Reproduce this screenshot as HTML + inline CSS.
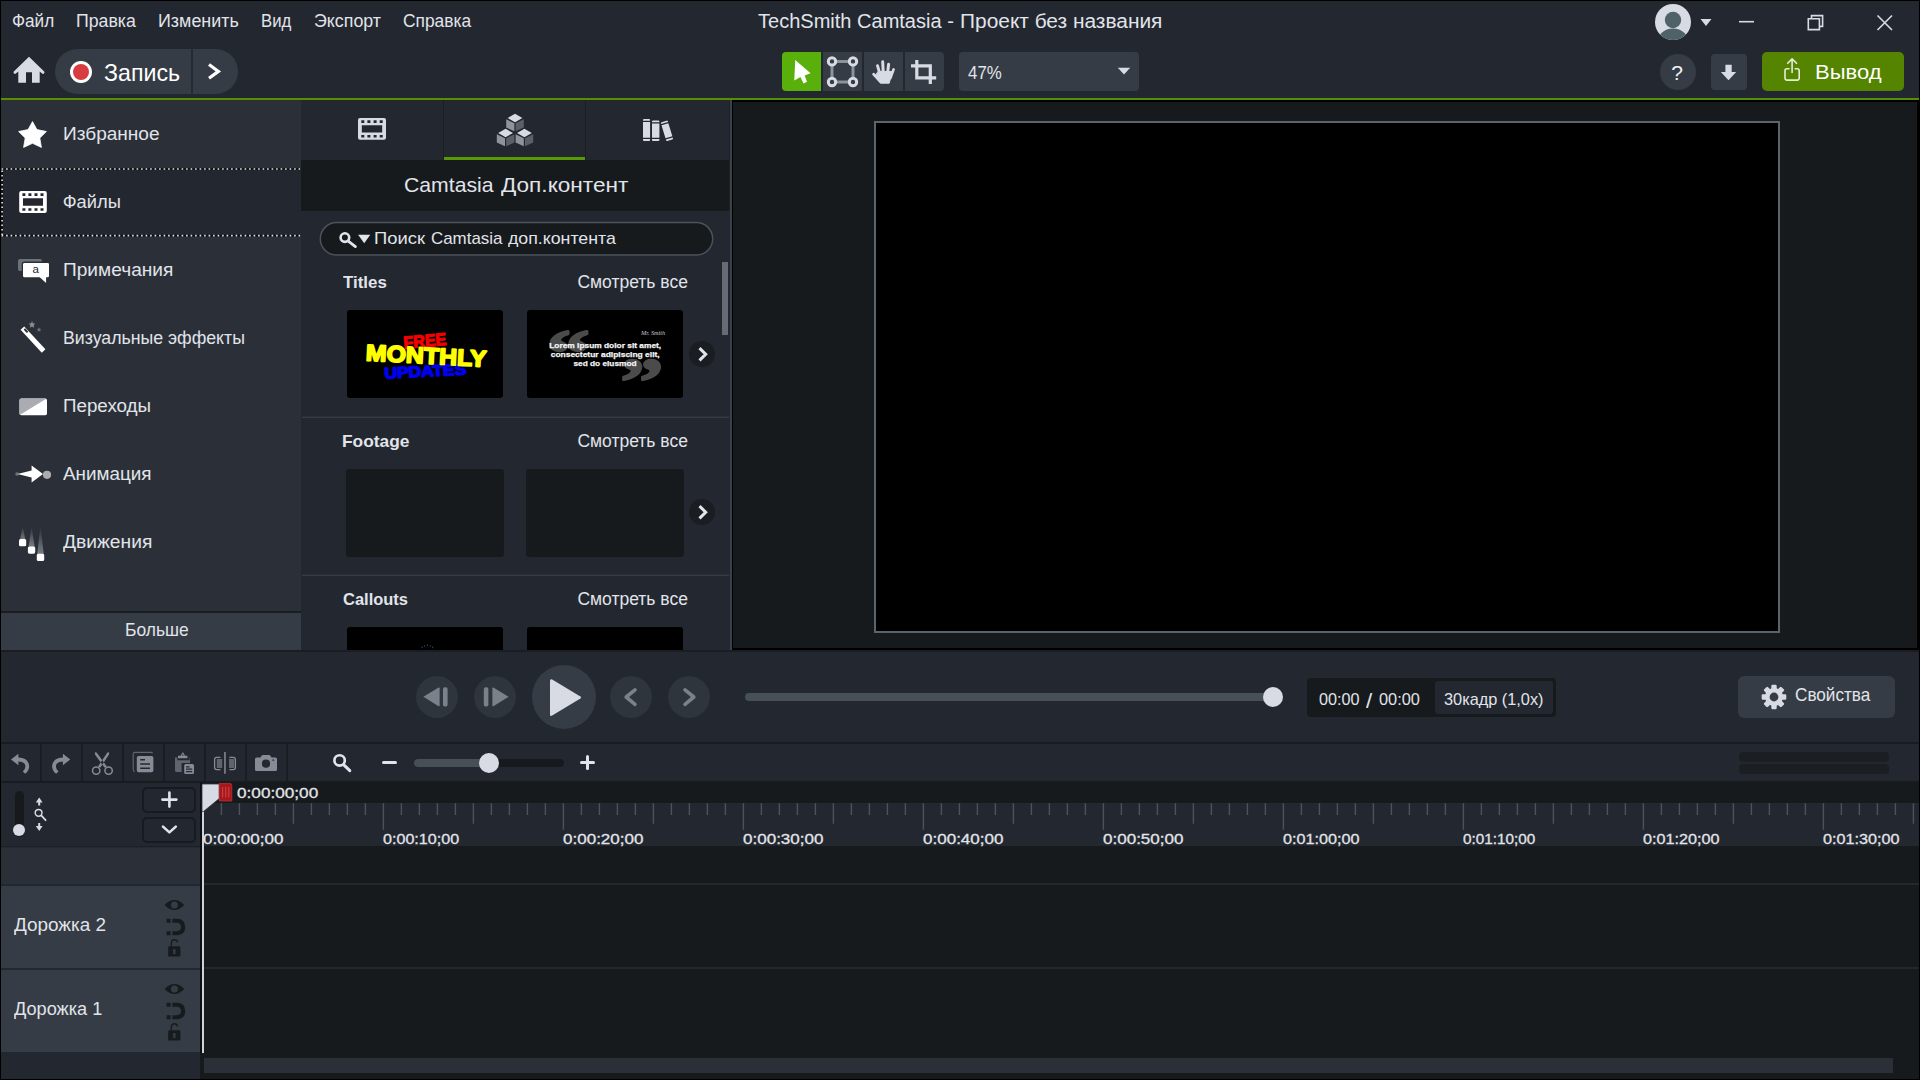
<!DOCTYPE html>
<html lang="ru">
<head>
<meta charset="utf-8">
<title>TechSmith Camtasia - Проект без названия</title>
<style>
html,body{margin:0;padding:0;background:#000;}
body{width:1920px;height:1080px;overflow:hidden;font-family:"Liberation Sans",sans-serif;}
#app{position:absolute;left:0;top:0;width:1920px;height:1080px;overflow:hidden;background:#000;}
#app div,#app span,#app svg{position:absolute;box-sizing:border-box;}
.t{white-space:nowrap;line-height:1;transform-origin:0 50%;display:block;color:#e1e4ea;}
</style>
</head>
<body>
<div id="app">

<!-- top bar -->
<div style="left:1px;top:1px;width:1918px;height:97px;background:#23272f"></div>
<div style="left:1px;top:98px;width:1918px;height:2px;background:#568f00"></div>
<!-- sidebar -->
<div style="left:1px;top:100px;width:300px;height:511px;background:#2b3038"></div>
<div style="left:1px;top:168px;width:300px;height:68px;background:#23272f"></div>
<svg style="left:1px;top:167px" width="300" height="70" viewBox="1 167 300 70"><path d="M1.2 169 H301 M1.2 235.6 H301 M2.1 169 V235.6" fill="none" stroke="#0c0e11" stroke-width="1.6"/><path d="M1.6 169 H301 M1.6 235.6 H301 M2.1 170.4 V235" fill="none" stroke="#e4e4e4" stroke-width="1.6" stroke-dasharray="1.6 2.9"/></svg>
<div style="left:1px;top:611px;width:300px;height:2px;background:#1a1e22"></div>
<div style="left:1px;top:613px;width:300px;height:37px;background:#353c45"></div>
<!-- media panel -->
<div style="left:301px;top:100px;width:428px;height:60px;background:#23272f"></div>
<div style="left:443px;top:100px;width:1px;height:60px;background:#1a1e22"></div>
<div style="left:585px;top:100px;width:1px;height:60px;background:#1a1e22"></div>
<div style="left:444px;top:157px;width:141px;height:3px;background:#5a9708"></div>
<div style="left:301px;top:160px;width:428px;height:51px;background:#161a1d"></div>
<div style="left:301px;top:211px;width:429px;height:439px;background:#23272f"></div>
<div style="left:730px;top:100px;width:2px;height:550px;background:#3a414a"></div>
<div style="left:729px;top:100px;width:1px;height:111px;background:#1e2228"></div>
<!-- search -->
<svg style="left:318px;top:220px" width="398" height="38" viewBox="318 220 398 38"><rect x="320.3" y="222.6" width="392.4" height="32.4" rx="16.2" fill="#161a1d" stroke="#4c535b" stroke-width="1.5"/></svg>
<!-- scrollbar -->
<div style="left:722px;top:262px;width:6px;height:73px;background:#666b75"></div>
<!-- section separators -->
<div style="left:302px;top:416px;width:427px;height:1px;background:#2a2f37"></div><div style="left:302px;top:417px;width:427px;height:1px;background:#363c45"></div>
<div style="left:302px;top:574px;width:427px;height:1px;background:#2a2f37"></div><div style="left:302px;top:575px;width:427px;height:1px;background:#363c45"></div>
<!-- thumbs -->
<div style="left:347px;top:310px;width:156px;height:88px;border-radius:3px;background:#000"></div>
<div style="left:527px;top:310px;width:156px;height:88px;border-radius:3px;background:#000"></div>
<div style="left:346px;top:469px;width:158px;height:88px;border-radius:3px;background:#161a1d"></div>
<div style="left:526px;top:469px;width:158px;height:88px;border-radius:3px;background:#161a1d"></div>
<div style="left:347px;top:627px;width:156px;height:23px;border-radius:3px 3px 0 0;background:#000"></div>
<div style="left:527px;top:627px;width:156px;height:23px;border-radius:3px 3px 0 0;background:#000"></div>
<div style="left:689px;top:341px;width:26px;height:26px;border-radius:13px;background:#1a1e22"></div>
<div style="left:689px;top:499px;width:26px;height:26px;border-radius:13px;background:#1a1e22"></div>
<!-- preview -->
<div style="left:733px;top:102px;width:1184px;height:546px;background:#161a1d"></div>
<div style="left:874px;top:121px;width:906px;height:512px;background:#000;border:2px solid #5b636c"></div>
<!-- playback bar -->
<div style="left:1px;top:650px;width:1918px;height:2px;background:#1a1e22"></div>
<div style="left:1px;top:652px;width:1918px;height:90px;background:#23272f"></div>
<div style="left:1px;top:742px;width:1918px;height:2px;background:#181c20"></div>
<!-- timeline toolbar -->
<div style="left:1px;top:744px;width:1918px;height:37px;background:#23272f"></div>
<div style="left:1px;top:781px;width:1918px;height:2px;background:#181c20"></div>
<!-- timeline header left -->
<div style="left:1px;top:783px;width:199px;height:63px;background:#23272f"></div>
<div style="left:1px;top:846px;width:199px;height:1px;background:#1c2025"></div>
<div style="left:1px;top:847px;width:199px;height:37px;background:#2b3038"></div>
<div style="left:1px;top:847px;width:199px;height:1px;background:#252a31"></div>
<div style="left:1px;top:884px;width:199px;height:2px;background:#23272f"></div>
<div style="left:1px;top:886px;width:199px;height:82px;background:#353c45"></div>
<div style="left:1px;top:968px;width:199px;height:2px;background:#23272f"></div>
<div style="left:1px;top:970px;width:199px;height:82px;background:#353c45"></div>
<div style="left:1px;top:1052px;width:199px;height:27px;background:#23272f"></div>
<!-- timeline right -->
<div style="left:200px;top:783px;width:1719px;height:296px;background:#161a1d"></div>
<div style="left:200px;top:783px;width:2px;height:270px;background:#0c0f11"></div>
<div style="left:203px;top:803px;width:1716px;height:43px;background:#23272f"></div>
<div style="left:203px;top:883px;width:1716px;height:2px;background:#23272f"></div>
<div style="left:203px;top:967px;width:1716px;height:2px;background:#23272f"></div>
<div style="left:204px;top:1058px;width:1689px;height:15px;background:#2b3038"></div>

<!-- ===== top toolbar ===== -->
<svg style="left:12px;top:54px" width="36" height="32" viewBox="12 54 36 32"><path d="M29 56.8 L44.2 71.6 Q44.9 72.6 44 73.5 Q43.1 74.3 42.1 73.6 L39.7 71.4 V82.8 H32 V72.3 H26 V82.8 H18.3 V71.4 L15.9 73.6 Q14.9 74.3 14 73.5 Q13.1 72.6 13.8 71.6 Z" fill="#d8dbe3"/></svg>
<div style="left:55px;top:49px;width:183px;height:45px;border-radius:22.5px;background:#353c45"></div>
<div style="left:191px;top:49px;width:2px;height:45px;background:#262b32"></div>
<div style="left:70px;top:61px;width:22px;height:22px;border-radius:11px;background:#fff"></div>
<div style="left:73px;top:64px;width:16px;height:16px;border-radius:8px;background:#d63c40"></div>
<svg style="left:205px;top:60px" width="20" height="24" viewBox="205 60 20 24"><path d="M209 64.5 L218.4 71.4 L209 78.3" fill="none" stroke="#fff" stroke-width="3.2"/></svg>
<!-- tool buttons -->
<div style="left:782px;top:52px;width:39px;height:39px;background:#5ab00a;border-radius:4px 0 0 4px"></div>
<div style="left:823px;top:52px;width:39px;height:39px;background:#353c45"></div>
<div style="left:864px;top:52px;width:39px;height:39px;background:#353c45"></div>
<div style="left:905px;top:52px;width:39px;height:39px;background:#353c45;border-radius:0 4px 4px 0"></div>
<svg style="left:782px;top:52px" width="39" height="39" viewBox="782 52 39 39"><path d="M795.2 60 L810.6 73.2 L804.6 75.6 L807 81.8 L803.6 83.4 L800.4 77 L794.3 80.4 Z" fill="#fff"/></svg>
<svg style="left:823px;top:52px" width="39" height="39" viewBox="823 52 39 39"><g fill="none"><path d="M832 61.4 H853 V82 H832 Z" stroke="#8d929b" stroke-width="3"/><g stroke="#d8dbe3" stroke-width="3" fill="#353c45"><circle cx="832" cy="61.4" r="3.7"/><circle cx="853" cy="61.4" r="3.7"/><circle cx="832" cy="82" r="3.7"/><circle cx="853" cy="82" r="3.7"/></g></g></svg>
<svg style="left:864px;top:52px" width="39" height="39" viewBox="864 52 39 39"><g fill="#d8dbe3" stroke="#d8dbe3" stroke-linecap="round" stroke-linejoin="round"><path d="M878.6 71.4 L892.4 71.6 L889.2 83.2 L880.4 83.2 L874.6 76.6 Z" stroke-width="1"/><g fill="none"><path d="M873.6 74.2 L879 79.6" stroke-width="2.7"/><path d="M877.5 65.7 L880.2 75" stroke-width="2.9"/><path d="M882.7 61.8 L883.3 74" stroke-width="3"/><path d="M888.6 64.3 L887.5 74" stroke-width="3"/><path d="M893.6 69.4 L890.4 78" stroke-width="2.7"/></g></g></svg>
<svg style="left:905px;top:52px" width="39" height="39" viewBox="905 52 39 39"><path d="M916.8 60 V77.9 H936.2 M911 65.8 H930.3 V84" fill="none" stroke="#d8dbe3" stroke-width="3.2"/></svg>
<!-- zoom dropdown -->
<div style="left:959px;top:52px;width:180px;height:39px;background:#353c45;border-radius:4px"></div>
<svg style="left:1115px;top:65px" width="18" height="12" viewBox="1115 65 18 12"><path d="M1117.8 67.8 H1130.2 L1124 74.4 Z" fill="#d8dbe3"/></svg>
<!-- account + window controls -->
<svg style="left:1654px;top:3px" width="38" height="38" viewBox="1654 3 38 38"><defs><clipPath id="av"><circle cx="1673" cy="22" r="18"/></clipPath></defs><circle cx="1673" cy="22" r="18" fill="#d8dbe3"/><g clip-path="url(#av)" fill="#4f6268"><circle cx="1673" cy="20" r="8.2"/><ellipse cx="1673" cy="43" rx="16" ry="14.5"/></g></svg>
<svg style="left:1699px;top:17px" width="14" height="10" viewBox="1699 17 14 10"><path d="M1700.5 19 H1711.5 L1706 26 Z" fill="#d8dbe3"/></svg>
<svg style="left:1735px;top:10px" width="165" height="26" viewBox="1735 10 165 26"><g fill="none" stroke="#d8dbe3" stroke-width="1.6"><path d="M1739 21.7 H1754"/><path d="M1808.3 18.8 H1819.4 V29.6 H1808.3 Z"/><path d="M1811.5 18.8 V15.6 H1822.6 V26.4 H1819.4"/><path d="M1877.5 15.5 L1892 30 M1892 15.5 L1877.5 30"/></g></svg>
<!-- help / download / output -->
<div style="left:1660px;top:54px;width:36px;height:36px;border-radius:18px;background:#353c45"></div>
<span class="t" style="left:1671.3px;top:61.6px;font-size:21px;color:#f0f2f6">?</span>
<div style="left:1711px;top:54px;width:36px;height:36px;border-radius:4px;background:#353c45"></div>
<svg style="left:1711px;top:54px" width="36" height="36" viewBox="1711 54 36 36"><path d="M1725.4 64.8 H1731.7 V72 H1736.2 L1728.5 80.2 L1720.9 72 H1725.4 Z" fill="#d8dbe3"/></svg>
<div style="left:1762px;top:52px;width:142px;height:39px;border-radius:5px;background:#548400"></div>
<svg style="left:1780px;top:55px" width="24" height="30" viewBox="1780 55 24 30"><g fill="none" stroke="#e6ecd8" stroke-width="1.6" stroke-linecap="round" stroke-linejoin="round"><path d="M1789 68.8 H1787 Q1785 68.8 1785 70.8 V78.1 Q1785 80.1 1787 80.1 H1797.2 Q1799.2 80.1 1799.2 78.1 V70.8 Q1799.2 68.8 1797.2 68.8 H1795.2"/><path d="M1792.1 72.4 V58.9 M1787.7 63.3 L1792.1 58.9 L1796.5 63.3"/></g></svg>
<!-- ===== sidebar icons ===== -->
<svg style="left:17px;top:120px" width="32" height="30" viewBox="17 120 32 30"><path d="M32.5 121.6 L36.9 129.6 L46.4 131.5 L39.8 138 L41.4 147.4 L32.5 143.3 L23.6 147.4 L25.2 138 L18.6 131.5 L28.1 129.6 Z" fill="#fff" stroke="#fff" stroke-width="0.8" stroke-linejoin="round"/></svg>
<svg style="left:18px;top:190px" width="30" height="24" viewBox="18 190 30 24"><path fill-rule="evenodd" fill="#fff" d="M21.3 191 H44.7 Q46.8 191 46.8 193 V211 Q46.8 213 44.7 213 H21.3 Q19.2 213 19.2 211 V193 Q19.2 191 21.3 191 Z M23 198.2 V205.8 H43 V198.2 Z M22.4 193.3 h3 v2.6 h-3 Z M28.4 193.3 h3 v2.6 h-3 Z M34.5 193.3 h3 v2.6 h-3 Z M40.5 193.3 h3 v2.6 h-3 Z M22.4 208.2 h3 v2.6 h-3 Z M28.4 208.2 h3 v2.6 h-3 Z M34.5 208.2 h3 v2.6 h-3 Z M40.5 208.2 h3 v2.6 h-3 Z"/></svg>
<svg style="left:17px;top:257px" width="34" height="28" viewBox="17 257 34 28"><rect x="18" y="259" width="24" height="12" rx="2" fill="#6c7279"/><path d="M24.5 262.2 H47.7 Q49.7 262.2 49.7 264.2 V276 Q49.7 278 47.7 278 H46.8 V284.6 L39.4 278 H24.5 Q22.3 278 22.3 276 V264.2 Q22.3 262.2 24.5 262.2 Z" fill="#fff" stroke="#2b3038" stroke-width="1.4"/><text x="35.7" y="273.2" font-family="'Liberation Sans', sans-serif" font-size="11.5" font-weight="400" fill="#23272f" text-anchor="middle">a</text></svg>
<svg style="left:17px;top:318px" width="34" height="36" viewBox="17 318 34 36"><path d="M24.2 326.4 L45.4 349.3 L41.8 352.7 L20.6 329.8 Z" fill="#fff"/><path d="M23.6 329.6 L25.1 328.2 L28.3 331.7 L26.8 333.1 Z" fill="#2b3038"/><path d="M32 321 L33 323.4 L35.4 323.6 L33.6 325.2 L34.2 327.7 L32 326.4 L29.8 327.7 L30.4 325.2 L28.6 323.6 L31 323.4 Z" fill="#8b9096"/><path d="M39 327.2 L39.7 328.8 L41.4 329 L40.1 330.1 L40.5 331.8 L39 330.9 L37.5 331.8 L37.9 330.1 L36.6 329 L38.3 328.8 Z" fill="#6c7279"/></svg>
<svg style="left:18px;top:397px" width="30" height="20" viewBox="18 397 30 20"><defs><clipPath id="trc"><rect x="19.5" y="398.5" width="27.5" height="16.7" rx="1.8"/></clipPath></defs><g clip-path="url(#trc)"><rect x="19" y="398" width="29" height="18" fill="#fff"/><path d="M19 398 H47.5 L19 415.6 Z" fill="#a9adb1"/></g></svg>
<svg style="left:14px;top:463px" width="40" height="22" viewBox="14 463 40 22"><circle cx="17" cy="474" r="1.8" fill="#6c7279"/><path d="M17.5 474 L31.6 470.6 V465.6 L43 474 L31.6 482.4 V477.6 Z" fill="#fff"/><circle cx="47" cy="474.8" r="4.1" fill="#a9adb1"/></svg>
<svg style="left:17px;top:524px" width="30" height="40" viewBox="17 524 30 40"><defs><linearGradient id="trl" x1="0" y1="0" x2="0" y2="1"><stop offset="0" stop-color="#8b9096" stop-opacity="0"/><stop offset="1" stop-color="#8b9096" stop-opacity="0.85"/></linearGradient></defs><path d="M22.7 526 L25.6 541 H19.8 Z" fill="url(#trl)"/><path d="M31.6 526 L34.8 548 H28.4 Z" fill="url(#trl)"/><path d="M40.4 526 L44 556 H37 Z" fill="url(#trl)"/><rect x="19" y="539" width="7.2" height="7.3" rx="1.6" fill="#fff"/><rect x="27.9" y="546.4" width="7.3" height="7.3" rx="1.6" fill="#fff"/><rect x="36.8" y="553.8" width="7.4" height="7.3" rx="1.6" fill="#fff"/></svg>
<!-- ===== panel tab icons ===== -->
<svg style="left:357px;top:117px" width="30" height="24" viewBox="357 117 30 24"><path fill-rule="evenodd" fill="#d8dbe3" d="M360 118 H384 Q386 118 386 120 V137.8 Q386 139.8 384 139.8 H360 Q358 139.8 358 137.8 V120 Q358 118 360 118 Z M361.8 125.2 V132.6 H382.2 V125.2 Z M361.3 120.3 h3 v2.6 h-3 Z M367.4 120.3 h3 v2.6 h-3 Z M373.6 120.3 h3 v2.6 h-3 Z M379.7 120.3 h3 v2.6 h-3 Z M361.3 134.9 h3 v2.6 h-3 Z M367.4 134.9 h3 v2.6 h-3 Z M373.6 134.9 h3 v2.6 h-3 Z M379.7 134.9 h3 v2.6 h-3 Z"/></svg>
<svg style="left:495px;top:112px" width="40" height="36" viewBox="495 112 40 36"><path d="M515.0 113.8 L522.4 118.0 L515.0 122.2 L507.6 118.0 Z" fill="#d8dbe3"/><path d="M506.2 119.3 L514.4 123.2 L514.4 131.2 L506.2 127.6 Z" fill="#8e939c"/><path d="M515.6 123.2 L523.8 119.3 L523.8 127.6 L515.6 131.2 Z" fill="#5a5f69"/><path d="M505.6 128.8 L513.0 133.0 L505.6 137.2 L498.2 133.0 Z" fill="#d8dbe3"/><path d="M496.8 134.3 L505.0 138.2 L505.0 146.2 L496.8 142.6 Z" fill="#8e939c"/><path d="M506.2 138.2 L514.4 134.3 L514.4 142.6 L506.2 146.2 Z" fill="#5a5f69"/><path d="M524.4 128.8 L531.8 133.0 L524.4 137.2 L517.0 133.0 Z" fill="#d8dbe3"/><path d="M515.6 134.3 L523.8 138.2 L523.8 146.2 L515.6 142.6 Z" fill="#8e939c"/><path d="M525.0 138.2 L533.2 134.3 L533.2 142.6 L525.0 146.2 Z" fill="#5a5f69"/></svg>
<svg style="left:641px;top:116px" width="36" height="28" viewBox="641 116 36 28"><g fill="#d8dbe3"><path d="M644 118.9 H649 Q650.1 118.9 650.1 120 V120.7 H643 V120 Q643 118.9 644 118.9 Z M643 121.9 H650.1 V137.8 H643 Z M643 139 H650.1 V140 Q650.1 141.1 649 141.1 H644 Q643 141.1 643 140 Z"/><path d="M653 120.5 H658.4 Q659.4 120.5 659.4 121.5 V122.2 H652 V121.5 Q652 120.5 653 120.5 Z M652 123.4 H659.4 V137.8 H652 Z M652 139 H659.4 V140 Q659.4 141.1 658.4 141.1 H653 Q652 141.1 652 140 Z"/><g transform="rotate(-17 667 131)"><path d="M664.4 121 H669.6 Q670.6 121 670.6 122 V122.7 H663.4 V122 Q663.4 121 664.4 121 Z M663.4 123.9 H670.6 V137.6 H663.4 Z M663.4 138.8 H670.6 V139.6 Q670.6 140.6 669.6 140.6 H664.4 Q663.4 140.6 663.4 139.6 Z"/></g></g></svg>
<!-- search icon -->
<svg style="left:337px;top:228px" width="36" height="22" viewBox="337 228 36 22"><circle cx="344.9" cy="237.6" r="4.3" fill="none" stroke="#e1e4ea" stroke-width="2.6"/><path d="M348.6 241.4 L355.4 246.6" stroke="#e1e4ea" stroke-width="2.8" stroke-linecap="round"/><path d="M358.1 234.8 H370.3 L364.2 243.2 Z" fill="#e1e4ea"/></svg>
<!-- carousel arrows -->
<svg style="left:689px;top:341px" width="26" height="26" viewBox="0 0 26 26"><path d="M10.5 7.1 L16.7 13.2 L10.5 19.4" fill="none" stroke="#e1e4ea" stroke-width="3"/></svg>
<svg style="left:689px;top:499px" width="26" height="26" viewBox="0 0 26 26"><path d="M10.5 7.1 L16.7 13.2 L10.5 19.4" fill="none" stroke="#e1e4ea" stroke-width="3"/></svg>
<!-- ===== playback controls ===== -->
<div style="left:416px;top:676px;width:42px;height:42px;border-radius:21px;background:#2f353d"></div>
<div style="left:474px;top:676px;width:42px;height:42px;border-radius:21px;background:#2f353d"></div>
<div style="left:532px;top:665px;width:64px;height:64px;border-radius:32px;background:#353c45"></div>
<div style="left:610px;top:676px;width:42px;height:42px;border-radius:21px;background:#2f353d"></div>
<div style="left:668px;top:676px;width:42px;height:42px;border-radius:21px;background:#2f353d"></div>
<svg style="left:416px;top:676px" width="42" height="42" viewBox="416 676 42 42"><path d="M423.4 696.8 L438.6 687.6 Q439.6 687.1 439.6 688.2 V705.6 Q439.6 706.7 438.6 706.2 Z" fill="#79818b"/><rect x="443" y="687.3" width="4.6" height="19.2" rx="1.8" fill="#79818b"/></svg>
<svg style="left:474px;top:676px" width="42" height="42" viewBox="474 676 42 42"><rect x="483.8" y="687.3" width="4.6" height="19.2" rx="1.8" fill="#79818b"/><path d="M508.6 696.8 L493.4 687.6 Q492.4 687.1 492.4 688.2 V705.6 Q492.4 706.7 493.4 706.2 Z" fill="#79818b"/></svg>
<svg style="left:532px;top:665px" width="64" height="64" viewBox="532 665 64 64"><path d="M552.2 679.6 L580.4 696.6 Q581.8 697.6 580.4 698.6 L552.2 715.6 Q550 716.6 550 714.4 V681 Q550 678.6 552.2 679.6 Z" fill="#d8dbe3"/></svg>
<svg style="left:610px;top:676px" width="42" height="42" viewBox="610 676 42 42"><path d="M635 689.8 L626.2 697 L635 704.4" fill="none" stroke="#79818b" stroke-width="3.6" stroke-linecap="round" stroke-linejoin="round"/></svg>
<svg style="left:668px;top:676px" width="42" height="42" viewBox="668 676 42 42"><path d="M685 689.8 L693.8 697 L685 704.4" fill="none" stroke="#79818b" stroke-width="3.6" stroke-linecap="round" stroke-linejoin="round"/></svg>
<div style="left:745px;top:693px;width:530px;height:8px;border-radius:4px;background:#475059"></div>
<div style="left:1263px;top:687px;width:20px;height:20px;border-radius:10px;background:#d8dbe3"></div>
<div style="left:1307px;top:678px;width:249px;height:39px;border-radius:4px;background:#161a1d"></div>
<div style="left:1435px;top:681px;width:118px;height:33px;border-radius:3px;background:#23272f"></div>
<div style="left:1738px;top:676px;width:157px;height:42px;border-radius:6px;background:#353c45"></div>
<svg style="left:1759px;top:682px" width="30" height="30" viewBox="-15 -15 30 30"><g fill="#d8dbe3"><path fill-rule="evenodd" d="M0 -9 A9 9 0 1 0 0 9 A9 9 0 1 0 0 -9 Z M0 -4.4 A4.4 4.4 0 1 1 0 4.4 A4.4 4.4 0 1 1 0 -4.4 Z"/><rect x="-2.7" y="-12.3" width="5.4" height="5" rx="1.2" transform="rotate(0)"/><rect x="-2.7" y="-12.3" width="5.4" height="5" rx="1.2" transform="rotate(45)"/><rect x="-2.7" y="-12.3" width="5.4" height="5" rx="1.2" transform="rotate(90)"/><rect x="-2.7" y="-12.3" width="5.4" height="5" rx="1.2" transform="rotate(135)"/><rect x="-2.7" y="-12.3" width="5.4" height="5" rx="1.2" transform="rotate(180)"/><rect x="-2.7" y="-12.3" width="5.4" height="5" rx="1.2" transform="rotate(225)"/><rect x="-2.7" y="-12.3" width="5.4" height="5" rx="1.2" transform="rotate(270)"/><rect x="-2.7" y="-12.3" width="5.4" height="5" rx="1.2" transform="rotate(315)"/></g></svg>

<!-- ===== timeline toolbar ===== -->
<div style="left:40px;top:744px;width:2px;height:37px;background:#1a1e22"></div>
<div style="left:81px;top:744px;width:2px;height:37px;background:#1a1e22"></div>
<div style="left:122px;top:744px;width:2px;height:37px;background:#1a1e22"></div>
<div style="left:163px;top:744px;width:2px;height:37px;background:#1a1e22"></div>
<div style="left:204px;top:744px;width:2px;height:37px;background:#1a1e22"></div>
<div style="left:245px;top:744px;width:2px;height:37px;background:#1a1e22"></div>
<div style="left:286px;top:744px;width:2px;height:37px;background:#1a1e22"></div>
<svg style="left:1px;top:744px" width="39" height="37" viewBox="1 744 39 37"><path d="M18.4 753.8 V757.4 Q28.6 757.6 29.2 766.2 Q29.2 770.6 25.2 773.8 L22.8 771.4 Q25.6 769 25.4 766.2 Q25 761.8 18.4 761.4 V765.2 L11 759.4 Z" fill="#868b95"/></svg>
<svg style="left:42px;top:744px" width="39" height="37" viewBox="42 744 39 37"><path d="M62.9 753.8 V757.4 Q52.7 757.6 52.1 766.2 Q52.1 770.6 56.1 773.8 L58.5 771.4 Q55.7 769 55.9 766.2 Q56.3 761.8 62.9 761.4 V765.2 L70.3 759.4 Z" fill="#868b95"/></svg>
<svg style="left:83px;top:744px" width="39" height="37" viewBox="83 744 39 37"><g fill="none" stroke="#868b95" stroke-width="1.5"><circle cx="96.2" cy="770.6" r="3.7"/><circle cx="108.6" cy="770.6" r="3.7"/></g><path d="M94.9 752.2 L96.6 752.4 L106.8 766.4 L104.6 767.8 L95 754.6 Z M109.1 752.2 L107.4 752.4 L98 766.4 L100.2 767.8 L109 754.6 Z" fill="#868b95"/></svg>
<svg style="left:124px;top:744px" width="39" height="37" viewBox="124 744 39 37"><path d="M152.6 753.4 Q152.2 752.4 150.8 752.4 H135 Q133.2 752.4 133.2 754.2 V769.6 Q133.2 771.4 134.6 771.6" fill="none" stroke="#5f646e" stroke-width="1.2"/><path fill-rule="evenodd" d="M138.6 756 H151.6 Q153.4 756 153.4 757.8 V770.4 Q153.4 772.2 151.6 772.2 H138.6 Q136.8 772.2 136.8 770.4 V757.8 Q136.8 756 138.6 756 Z M140.2 759 V760.6 H145 V759 Z M140.2 763.2 V764.8 H150 V763.2 Z M140.2 767.4 V769 H150 V767.4 Z" fill="#868b95"/></svg>
<svg style="left:165px;top:744px" width="39" height="37" viewBox="165 744 39 37"><path d="M175 757.6 H177.4 V760.2 H189.6 V757.6 H190 V763 H181.6 V772 H176.6 Q175 772 175 770.4 Z" fill="#5f646e"/><path d="M178 755.8 H180.6 L182.4 752.4 H183.2 L185 755.8 H187.4 V758.2 H178 Z M181.9 755.4 H183.7 L182.8 753.8 Z" fill="#868b95" fill-rule="evenodd"/><path fill-rule="evenodd" d="M185.8 764 H192.4 Q194 764 194 765.6 V772.4 Q194 774 192.4 774 H185.8 Q184.2 774 184.2 772.4 V765.6 Q184.2 764 185.8 764 Z M186 766.2 V767.4 H189.6 V766.2 Z M186 768.6 V769.8 H192.2 V768.6 Z M186 771 V772.2 H192.2 V771 Z" fill="#868b95"/></svg>
<svg style="left:206px;top:744px" width="39" height="37" viewBox="206 744 39 37"><path d="M220.4 757.4 H216.6 Q214.6 757.4 214.6 759.4 V767.6 Q214.6 769.6 216.6 769.6 H220.4 M229.4 757.4 H233.4 Q235.4 757.4 235.4 759.4 V767.6 Q235.4 769.6 233.4 769.6 H229.4" fill="none" stroke="#868b95" stroke-width="1.3"/><rect x="216.8" y="759" width="5.4" height="9" fill="#5f646e"/><rect x="229" y="759" width="5.2" height="9" fill="#5f646e"/><rect x="224.2" y="752" width="1.5" height="21.8" fill="#868b95"/></svg>
<svg style="left:247px;top:744px" width="39" height="37" viewBox="247 744 39 37"><path fill-rule="evenodd" d="M256.6 757.4 H260.4 L261.8 755.4 Q262.2 755 262.8 755 H269.2 Q269.8 755 270.2 755.4 L271.6 757.4 H275.4 Q277 757.4 277 759 V769.4 Q277 771 275.4 771 H256.6 Q255 771 255 769.4 V759 Q255 757.4 256.6 757.4 Z M266 759.6 A4.1 4.1 0 1 0 266 767.8 A4.1 4.1 0 1 0 266 759.6 Z M272.4 759.4 V760.8 H274.2 V759.4 Z" fill="#868b95"/></svg>
<svg style="left:330px;top:750px" width="26" height="26" viewBox="330 750 26 26"><circle cx="339.6" cy="760.4" r="5.2" fill="none" stroke="#e1e4ea" stroke-width="2.6"/><path d="M343.8 764.8 L349.8 770.6" stroke="#e1e4ea" stroke-width="3" stroke-linecap="round"/></svg>
<div style="left:382px;top:761px;width:15px;height:3px;border-radius:1.5px;background:#e1e4ea"></div>
<div style="left:414px;top:759px;width:150px;height:8px;border-radius:4px;background:#161a1d"></div>
<div style="left:414px;top:759px;width:80px;height:8px;border-radius:4px;background:#475059"></div>
<div style="left:479px;top:753px;width:20px;height:20px;border-radius:10px;background:#d8dbe3"></div>
<div style="left:580px;top:761px;width:15px;height:3px;border-radius:1.5px;background:#e1e4ea"></div>
<div style="left:586px;top:755px;width:3px;height:15px;border-radius:1.5px;background:#e1e4ea"></div>
<div style="left:1739px;top:752px;width:150px;height:10px;border-radius:4px;background:#1b1f23"></div>
<div style="left:1739px;top:764px;width:150px;height:10px;border-radius:4px;background:#1b1f23"></div>
<!-- ===== timeline header ===== -->
<div style="left:15px;top:791px;width:9px;height:46px;border-radius:4.5px;background:#161a1d"></div>
<div style="left:13px;top:824px;width:12px;height:12px;border-radius:6px;background:#d8dbe3"></div>
<svg style="left:30px;top:794px" width="20" height="40" viewBox="30 794 20 40"><path d="M39.2 797.6 L42.6 802.6 H40.2 V805.6 H38.2 V802.6 H35.8 Z M39.2 831 L42.6 826 H40.2 V823 H38.2 V826 H35.8 Z" fill="#d8dbe3"/><circle cx="38.6" cy="812.8" r="3.4" fill="none" stroke="#d8dbe3" stroke-width="1.5"/><path d="M41.2 815.4 L45.6 820.2" stroke="#d8dbe3" stroke-width="1.8" stroke-linecap="round"/></svg>
<div style="left:142px;top:787px;width:54px;height:26px;border-radius:5px;border:2px solid #171b1f;background:#23272f"></div>
<div style="left:142px;top:817px;width:54px;height:26px;border-radius:5px;border:2px solid #171b1f;background:#23272f"></div>
<svg style="left:142px;top:787px" width="54" height="56" viewBox="142 787 54 56"><path d="M162.4 799.6 H176.4 M169.4 792.6 V806.6" stroke="#e1e4ea" stroke-width="2.6" stroke-linecap="round"/><path d="M163 826.6 L169.4 832.4 L175.8 826.6" fill="none" stroke="#e1e4ea" stroke-width="2.6" stroke-linecap="round" stroke-linejoin="round"/></svg>
<svg style="left:200px;top:803px" width="1719" height="30" viewBox="200 803 1719 30"><path d="M221.4 803.2V814.9M239.4 803.2V814.9M257.4 803.2V814.9M275.4 803.2V814.9M293.4 803.2V823.7M311.4 803.2V814.9M329.4 803.2V814.9M347.4 803.2V814.9M365.4 803.2V814.9M383.4 803.2V829.7M401.4 803.2V814.9M419.4 803.2V814.9M437.4 803.2V814.9M455.4 803.2V814.9M473.4 803.2V823.7M491.4 803.2V814.9M509.4 803.2V814.9M527.4 803.2V814.9M545.4 803.2V814.9M563.4 803.2V829.7M581.4 803.2V814.9M599.4 803.2V814.9M617.4 803.2V814.9M635.4 803.2V814.9M653.4 803.2V823.7M671.4 803.2V814.9M689.4 803.2V814.9M707.4 803.2V814.9M725.4 803.2V814.9M743.4 803.2V829.7M761.4 803.2V814.9M779.4 803.2V814.9M797.4 803.2V814.9M815.4 803.2V814.9M833.4 803.2V823.7M851.4 803.2V814.9M869.4 803.2V814.9M887.4 803.2V814.9M905.4 803.2V814.9M923.4 803.2V829.7M941.4 803.2V814.9M959.4 803.2V814.9M977.4 803.2V814.9M995.4 803.2V814.9M1013.4 803.2V823.7M1031.4 803.2V814.9M1049.4 803.2V814.9M1067.4 803.2V814.9M1085.4 803.2V814.9M1103.4 803.2V829.7M1121.4 803.2V814.9M1139.4 803.2V814.9M1157.4 803.2V814.9M1175.4 803.2V814.9M1193.4 803.2V823.7M1211.4 803.2V814.9M1229.4 803.2V814.9M1247.4 803.2V814.9M1265.4 803.2V814.9M1283.4 803.2V829.7M1301.4 803.2V814.9M1319.4 803.2V814.9M1337.4 803.2V814.9M1355.4 803.2V814.9M1373.4 803.2V823.7M1391.4 803.2V814.9M1409.4 803.2V814.9M1427.4 803.2V814.9M1445.4 803.2V814.9M1463.4 803.2V829.7M1481.4 803.2V814.9M1499.4 803.2V814.9M1517.4 803.2V814.9M1535.4 803.2V814.9M1553.4 803.2V823.7M1571.4 803.2V814.9M1589.4 803.2V814.9M1607.4 803.2V814.9M1625.4 803.2V814.9M1643.4 803.2V829.7M1661.4 803.2V814.9M1679.4 803.2V814.9M1697.4 803.2V814.9M1715.4 803.2V814.9M1733.4 803.2V823.7M1751.4 803.2V814.9M1769.4 803.2V814.9M1787.4 803.2V814.9M1805.4 803.2V814.9M1823.4 803.2V829.7M1841.4 803.2V814.9M1859.4 803.2V814.9M1877.4 803.2V814.9M1895.4 803.2V814.9M1913.4 803.2V823.7" stroke="#4a545c" stroke-width="1.4" fill="none"/></svg>
<div style="left:202px;top:800px;width:2px;height:253px;background:#d0d3da"></div>
<svg style="left:200px;top:783px" width="34" height="30" viewBox="200 783 34 30"><path d="M202 784 H219.2 V798.6 L203.4 811.6 H202 Z" fill="#d8dbe3" stroke="#33383f" stroke-width="0.8"/><path d="M219.4 783.3 H229.6 Q231.8 783.3 231.8 785.5 V801 H219.4 Z" fill="#a9161b" stroke="#c4383b" stroke-width="0.7"/><path d="M222.7 787 V797.4 M225.8 787 V797.4 M228.8 787 V797.4" stroke="#c9494c" stroke-width="1"/></svg>
<svg style="left:162px;top:897px" width="26" height="64" viewBox="162 897 26 64"><path fill-rule="evenodd" d="M164.6 905 Q169.2 900 174.4 900 Q179.6 900 184.2 905 Q179.6 910 174.4 910 Q169.2 910 164.6 905 Z M174.4 901.5 A3.5 3.5 0 1 0 174.4 908.5 A3.5 3.5 0 1 0 174.4 901.5 Z" fill="#171b1e"/><path d="M166.6 918.8 H170.6 V922.8 H166.6 Z M166.6 931.2 H170.6 V935.2 H166.6 Z M172.4 918.8 H177 Q185.2 919 185.2 927 Q185.2 935 177 935.2 H172.4 V931.2 H176.8 Q181 931 181 927 Q181 923 176.8 922.8 H172.4 Z" fill="#171b1e"/><path fill-rule="evenodd" d="M169.4 946.2 H179.2 Q180.4 946.2 180.4 947.4 V955.4 Q180.4 956.6 179.2 956.6 H169.4 Q168.2 956.6 168.2 955.4 V947.4 Q168.2 946.2 169.4 946.2 Z M174.3 949 A1.5 1.5 0 0 0 173.4 951.7 L172.9 954 H175.7 L175.2 951.7 A1.5 1.5 0 0 0 174.3 949 Z" fill="#171b1e"/><path d="M171.4 946.4 V942.6 Q171.4 939.8 174.4 939.8 Q177.2 939.8 177.5 942.4" fill="none" stroke="#171b1e" stroke-width="1.4"/></svg>
<svg style="left:162px;top:981px" width="26" height="64" viewBox="162 897 26 64"><path fill-rule="evenodd" d="M164.6 905 Q169.2 900 174.4 900 Q179.6 900 184.2 905 Q179.6 910 174.4 910 Q169.2 910 164.6 905 Z M174.4 901.5 A3.5 3.5 0 1 0 174.4 908.5 A3.5 3.5 0 1 0 174.4 901.5 Z" fill="#171b1e"/><path d="M166.6 918.8 H170.6 V922.8 H166.6 Z M166.6 931.2 H170.6 V935.2 H166.6 Z M172.4 918.8 H177 Q185.2 919 185.2 927 Q185.2 935 177 935.2 H172.4 V931.2 H176.8 Q181 931 181 927 Q181 923 176.8 922.8 H172.4 Z" fill="#171b1e"/><path fill-rule="evenodd" d="M169.4 946.2 H179.2 Q180.4 946.2 180.4 947.4 V955.4 Q180.4 956.6 179.2 956.6 H169.4 Q168.2 956.6 168.2 955.4 V947.4 Q168.2 946.2 169.4 946.2 Z M174.3 949 A1.5 1.5 0 0 0 173.4 951.7 L172.9 954 H175.7 L175.2 951.7 A1.5 1.5 0 0 0 174.3 949 Z" fill="#171b1e"/><path d="M171.4 946.4 V942.6 Q171.4 939.8 174.4 939.8 Q177.2 939.8 177.5 942.4" fill="none" stroke="#171b1e" stroke-width="1.4"/></svg>

<!-- ===== thumbnails ===== -->
<svg style="left:347px;top:310px" width="156" height="88" viewBox="347 310 156 88" font-family="'Liberation Sans', sans-serif" font-weight="700" text-anchor="middle" stroke-linejoin="round"><text transform="translate(425.6 376.6) rotate(-3)" font-size="15.6" textLength="82" lengthAdjust="spacingAndGlyphs" fill="#0000f2" stroke="#0000f2" stroke-width="1.3">UPDATES</text><text transform="translate(425.4 346.8) rotate(-5)" font-size="17.2" textLength="43" lengthAdjust="spacingAndGlyphs" fill="#f40000" stroke="#f40000" stroke-width="1.2">FREE</text><text transform="translate(425.8 363.6) rotate(3)" font-size="23" textLength="121" lengthAdjust="spacingAndGlyphs" fill="#ffff00" stroke="#ffff00" stroke-width="1.7">MONTHLY</text></svg>
<svg style="left:527px;top:310px" width="156" height="88" viewBox="527 310 156 88" font-family="'Liberation Sans', sans-serif"><g font-size="66" font-weight="700" fill="#4b4b4b" stroke="#4b4b4b" stroke-width="2.4" stroke-linejoin="round" font-family="'Liberation Serif', serif"><text transform="translate(546.7 375.2) scale(1.3 1)">“</text><text transform="translate(620.6 402.8) scale(1.3 1)">”</text></g><g font-size="7.4" font-weight="700" fill="#f4f4f4" text-anchor="middle" stroke="#f4f4f4" stroke-width="0.25"><text x="605.2" y="348" textLength="112" lengthAdjust="spacingAndGlyphs">Lorem ipsum dolor sit amet,</text><text x="605.2" y="357" textLength="109" lengthAdjust="spacingAndGlyphs">consectetur adipiscing elit,</text><text x="605" y="366.2" textLength="63" lengthAdjust="spacingAndGlyphs">sed do eiusmod</text></g><text x="641" y="334.8" font-size="5.6" font-style="italic" fill="#d0d0d0" font-family="'Liberation Serif', serif" textLength="24" lengthAdjust="spacingAndGlyphs">Mr. Smith</text></svg>
<svg style="left:415px;top:642px" width="24" height="7" viewBox="415 642 24 7"><g fill="#17566a"><rect x="421.6" y="646.6" width="1" height="1.6"/><rect x="424.2" y="645.2" width="1" height="1.4"/><rect x="427" y="644.6" width="1" height="1.4"/><rect x="429.8" y="645.2" width="1" height="1.4"/><rect x="432.2" y="646.6" width="1" height="1.6"/></g></svg>

<!-- ===== text ===== -->
<span class="t" id="m1" style="left:12.33px;top:12.89px;font-size:17.5px;transform:scaleX(0.9801);">Файл</span>
<span class="t" id="m2" style="left:75.73px;top:12.89px;font-size:17.5px;transform:scaleX(1.0108);">Правка</span>
<span class="t" id="m3" style="left:157.88px;top:12.89px;font-size:17.5px;transform:scaleX(1.0229);">Изменить</span>
<span class="t" id="m4" style="left:260.95px;top:12.89px;font-size:17.5px;transform:scaleX(0.9560);">Вид</span>
<span class="t" id="m5" style="left:313.93px;top:12.89px;font-size:17.5px;transform:scaleX(1.0186);">Экспорт</span>
<span class="t" id="m6" style="left:402.92px;top:12.89px;font-size:17.5px;transform:scaleX(0.9922);">Справка</span>
<span class="t" id="title1" style="left:758.24px;top:12.19px;font-size:19.5px;transform:scaleX(1.0268);">TechSmith Camtasia -</span>
<span class="t" id="title2" style="left:959.50px;top:12.19px;font-size:19.5px;transform:scaleX(1.0715);">Проект без названия</span>
<span class="t" id="rec" style="left:104.15px;top:61.38px;font-size:24px;color:#ffffff;transform:scaleX(0.9656);">Запись</span>
<span class="t" id="zoomv" style="left:967.84px;top:64.89px;font-size:17.5px;transform:scaleX(0.9637);">47%</span>
<span class="t" id="outp" style="left:1815.06px;top:60.92px;font-size:21px;color:#ffffff;transform:scaleX(1.0489);">Вывод</span>
<span class="t" id="sb0" style="left:63.02px;top:125.21px;font-size:18.3px;transform:scaleX(1.0421);">Избранное</span>
<span class="t" id="sb1" style="left:62.69px;top:193.21px;font-size:18.3px;">Файлы</span>
<span class="t" id="sb2" style="left:62.75px;top:261.21px;font-size:18.3px;transform:scaleX(1.0454);">Примечания</span>
<span class="t" id="sb3" style="left:62.74px;top:329.21px;font-size:18.3px;transform:scaleX(0.9694);">Визуальные эффекты</span>
<span class="t" id="sb4" style="left:62.64px;top:397.21px;font-size:18.3px;transform:scaleX(1.0269);">Переходы</span>
<span class="t" id="sb5" style="left:62.85px;top:465.21px;font-size:18.3px;transform:scaleX(1.0321);">Анимация</span>
<span class="t" id="sb6" style="left:62.90px;top:533.21px;font-size:18.3px;transform:scaleX(1.0522);">Движения</span>
<span class="t" id="more" style="left:124.61px;top:621.63px;font-size:17.8px;transform:scaleX(0.9806);">Больше</span>
<span class="t" id="pha" style="left:403.91px;top:174.52px;font-size:20.3px;transform:scaleX(1.0454);">Camtasia</span>
<span class="t" id="phb" style="left:501.09px;top:174.52px;font-size:20.3px;transform:scaleX(1.1140);">Доп.контент</span>
<span class="t" id="srch1" style="left:374.47px;top:230.31px;font-size:17px;transform:scaleX(1.0811);">Поиск</span>
<span class="t" id="srch2" style="left:431.15px;top:230.31px;font-size:17px;transform:scaleX(0.9950);">Camtasia</span>
<span class="t" id="srch3" style="left:508.34px;top:230.31px;font-size:17px;transform:scaleX(1.0443);">доп.контента</span>
<span class="t" id="s0" style="left:343.27px;top:274.31px;font-size:17px;font-weight:700;transform:scaleX(0.9927);">Titles</span>
<span class="t" id="s0a" style="left:577.42px;top:273.89px;font-size:17.5px;">Смотреть все</span>
<span class="t" id="s1" style="left:342.04px;top:433.31px;font-size:17px;font-weight:700;transform:scaleX(1.0204);">Footage</span>
<span class="t" id="s1a" style="left:577.42px;top:432.89px;font-size:17.5px;">Смотреть все</span>
<span class="t" id="s2" style="left:343.06px;top:591.31px;font-size:17px;font-weight:700;transform:scaleX(0.9693);">Callouts</span>
<span class="t" id="s2a" style="left:577.42px;top:590.89px;font-size:17.5px;">Смотреть все</span>
<span class="t" id="time1" style="left:1318.72px;top:691.31px;font-size:17px;transform:scaleX(0.9536);">00:00</span>
<span class="t" id="time2" style="left:1366.10px;top:691.35px;font-size:20.5px;transform:scaleX(1.0893);">/</span>
<span class="t" id="time3" style="left:1379.37px;top:691.31px;font-size:17px;transform:scaleX(0.9603);">00:00</span>
<span class="t" id="fps" style="left:1444.18px;top:691.31px;font-size:17px;transform:scaleX(0.9596);">30кадр (1,0x)</span>
<span class="t" id="props" style="left:1795.15px;top:686.04px;font-size:18.5px;transform:scaleX(0.9263);">Свойства</span>
<span class="t" id="ph0" style="left:237.26px;top:784.66px;font-size:15.4px;transform:scaleX(1.1167);-webkit-text-stroke:0.3px #e1e4ea;">0:00:00;00</span>
<span class="t" id="r0" style="left:203.24px;top:830.66px;font-size:15.4px;transform:scaleX(1.1062);-webkit-text-stroke:0.3px #e1e4ea;">0:00:00;00</span>
<span class="t" id="r1" style="left:382.78px;top:830.66px;font-size:15.4px;transform:scaleX(1.0472);-webkit-text-stroke:0.3px #e1e4ea;">0:00:10;00</span>
<span class="t" id="r2" style="left:562.77px;top:830.66px;font-size:15.4px;transform:scaleX(1.1063);-webkit-text-stroke:0.3px #e1e4ea;">0:00:20;00</span>
<span class="t" id="r3" style="left:742.77px;top:830.66px;font-size:15.4px;transform:scaleX(1.1063);-webkit-text-stroke:0.3px #e1e4ea;">0:00:30;00</span>
<span class="t" id="r4" style="left:922.77px;top:830.66px;font-size:15.4px;transform:scaleX(1.1063);-webkit-text-stroke:0.3px #e1e4ea;">0:00:40;00</span>
<span class="t" id="r5" style="left:1102.77px;top:830.66px;font-size:15.4px;transform:scaleX(1.1063);-webkit-text-stroke:0.3px #e1e4ea;">0:00:50;00</span>
<span class="t" id="r6" style="left:1282.78px;top:830.66px;font-size:15.4px;transform:scaleX(1.0513);-webkit-text-stroke:0.3px #e1e4ea;">0:01:00;00</span>
<span class="t" id="r7" style="left:1462.74px;top:830.66px;font-size:15.4px;transform:scaleX(0.9949);-webkit-text-stroke:0.3px #e1e4ea;">0:01:10;00</span>
<span class="t" id="r8" style="left:1642.78px;top:830.66px;font-size:15.4px;transform:scaleX(1.0513);-webkit-text-stroke:0.3px #e1e4ea;">0:01:20;00</span>
<span class="t" id="r9" style="left:1822.78px;top:830.66px;font-size:15.4px;transform:scaleX(1.0513);-webkit-text-stroke:0.3px #e1e4ea;">0:01:30;00</span>
<span class="t" id="tr2" style="left:14.20px;top:916.21px;font-size:18.3px;transform:scaleX(1.0344);">Дорожка 2</span>
<span class="t" id="tr1" style="left:14.06px;top:1000.21px;font-size:18.3px;transform:scaleX(0.9932);">Дорожка 1</span>
</div>
</body>
</html>
